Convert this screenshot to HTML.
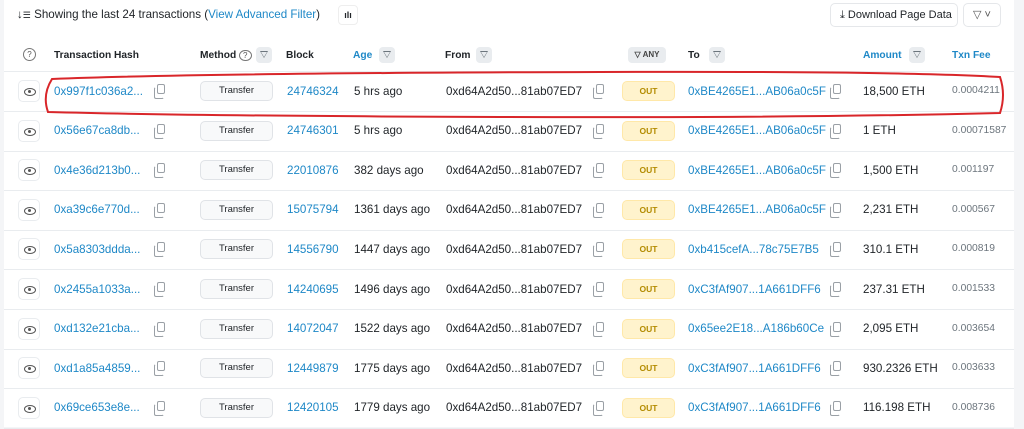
<!DOCTYPE html>
<html><head><meta charset="utf-8"><style>
*{margin:0;padding:0;box-sizing:border-box}
body{width:1024px;height:427px;overflow:hidden;background:#f4f5f7;font-family:"Liberation Sans",Arial,sans-serif;color:#212529;position:relative}
#card{position:absolute;left:4px;top:0;width:1010px;height:427px;background:#fff}
.a{position:absolute;white-space:nowrap}
.l{color:#1e88c7}
.t13{font-size:11.6px}
.h{font-size:10.2px;font-weight:bold;color:#212529}
.fb{position:absolute;width:16px;height:16px;background:#e9ecef;border-radius:4px}
.fb:after{content:"";position:absolute;left:4px;top:4px;border-left:4px solid transparent;border-right:4px solid transparent;border-top:7px solid #6c757d}
.fb:before{content:"";position:absolute;left:5px;top:5px;border-left:3px solid transparent;border-right:3px solid transparent;border-top:5px solid #e9ecef;z-index:2}
.eye{position:absolute;width:22px;height:22px;border:1px solid #e9ecef;border-radius:5px;background:#fff}
.eye:after{content:"";position:absolute;left:5px;top:7px;width:10px;height:6px;border:1.5px solid #555;border-radius:50%}
.eye:before{content:"";position:absolute;left:9px;top:9px;width:3px;height:3px;background:#555;border-radius:50%}
.meth{position:absolute;width:73px;height:20px;border:1px solid #e0e3e7;background:#f8f9fa;border-radius:5px;font-size:9.5px;text-align:center;line-height:18px;color:#212529}
.out{position:absolute;width:53px;height:20px;background:#fff3cd;border:1px solid #ffe8a8;border-radius:5px;font-size:8.5px;font-weight:bold;color:#b38b00;text-align:center;line-height:18px}
.cp{position:absolute;width:8px;height:10px;border:1.2px solid #9aa0a6;border-radius:2px;background:#fff}
.cp:before{content:"";position:absolute;left:-4px;top:2px;width:8px;height:10px;border:1.2px solid #9aa0a6;border-radius:2px;border-top-color:transparent;border-right-color:transparent}
.line{position:absolute;left:0;width:1010px;height:1px;background:#e9ecef}
.fee{font-size:10.3px;color:#6c757d}
</style></head><body>
<div id="card">
<div class="a" style="left:13px;top:8px;font-size:11.6px;color:#212529">↓<span style="font-size:9px">☰</span> Showing the last 24 transactions (<span class="l">View Advanced Filter</span>)</div>
<div class="a" style="left:334px;top:5px;width:20px;height:20px;border:1px solid #eee;border-radius:4px;font-size:9px;text-align:center;line-height:18px;font-weight:bold">ılı</div>
<div class="a" style="left:826px;top:3px;width:128px;height:24px;border:1px solid #e5e7ea;border-radius:5px;font-size:11px;line-height:22px;padding-left:9px">⤓ Download Page Data</div>
<div class="a" style="left:959px;top:3px;width:38px;height:24px;border:1px solid #e5e7ea;border-radius:5px;font-size:11px;line-height:22px;text-align:center;color:#555">▽ ˅</div>
<div class="a" style="left:19px;top:48px;width:13px;height:13px;border:1px solid #777;border-radius:50%;font-size:8px;text-align:center;line-height:11px;color:#555">?</div>
<div class="a h" style="left:50px;top:50px">Transaction Hash</div>
<div class="a h" style="left:196px;top:50px">Method <span style="font-weight:normal;border:1px solid #777;border-radius:50%;font-size:8px;padding:0 3px;color:#555">?</span></div>
<div class="fb" style="left:252px;top:47px"></div>
<div class="a h" style="left:282px;top:50px">Block</div>
<div class="a h l" style="left:349px;top:50px;color:#1e88c7">Age</div><div class="fb" style="left:375px;top:47px"></div>
<div class="a h" style="left:441px;top:50px">From</div><div class="fb" style="left:472px;top:47px"></div>
<div class="a" style="left:624px;top:47px;width:38px;height:16px;background:#e9ecef;border-radius:4px;font-size:8px;font-weight:bold;text-align:center;line-height:16px;color:#444">▽ ANY</div>
<div class="a h" style="left:684px;top:50px">To</div><div class="fb" style="left:705px;top:47px"></div>
<div class="a h" style="left:859px;top:50px;color:#1e88c7">Amount</div><div class="fb" style="left:905px;top:47px"></div>
<div class="a h" style="left:948px;top:50px;color:#1e88c7">Txn Fee</div>
<div class="line" style="top:71px"></div>

<div id="rows"></div>
<script>
var d=[["0x997f1c036a2...","24746324","5 hrs ago","0xBE4265E1...AB06a0c5F","18,500 ETH","0.0004211"],
["0x56e67ca8db...","24746301","5 hrs ago","0xBE4265E1...AB06a0c5F","1 ETH","0.00071587"],
["0x4e36d213b0...","22010876","382 days ago","0xBE4265E1...AB06a0c5F","1,500 ETH","0.001197"],
["0xa39c6e770d...","15075794","1361 days ago","0xBE4265E1...AB06a0c5F","2,231 ETH","0.000567"],
["0x5a8303ddda...","14556790","1447 days ago","0xb415cefA...78c75E7B5","310.1 ETH","0.000819"],
["0x2455a1033a...","14240695","1496 days ago","0xC3fAf907...1A661DFF6","237.31 ETH","0.001533"],
["0xd132e21cba...","14072047","1522 days ago","0x65ee2E18...A186b60Ce","2,095 ETH","0.003654"],
["0xd1a85a4859...","12449879","1775 days ago","0xC3fAf907...1A661DFF6","930.2326 ETH","0.003633"],
["0x69ce653e8e...","12420105","1779 days ago","0xC3fAf907...1A661DFF6","116.198 ETH","0.008736"]];
var h="";
d.forEach(function(r,i){var c=91+i*39.6;var t=c-6.5;
h+='<div class="eye" style="top:'+(c-11)+'px;left:14px"></div>';
h+='<div class="a t13 l" style="left:50px;top:'+t+'px">'+r[0]+'</div>';
h+='<div class="cp" style="left:153px;top:'+(c-7)+'px"></div>';
h+='<div class="meth" style="left:196px;top:'+(c-10)+'px">Transfer</div>';
h+='<div class="a t13 l" style="left:283px;top:'+t+'px">'+r[1]+'</div>';
h+='<div class="a t13" style="left:350px;top:'+t+'px">'+r[2]+'</div>';
h+='<div class="a t13" style="left:442px;top:'+t+'px">0xd64A2d50...81ab07ED7</div>';
h+='<div class="cp" style="left:592px;top:'+(c-7)+'px"></div>';
h+='<div class="out" style="left:618px;top:'+(c-10)+'px">OUT</div>';
h+='<div class="a t13 l" style="left:684px;top:'+t+'px">'+r[3]+'</div>';
h+='<div class="cp" style="left:829px;top:'+(c-7)+'px"></div>';
h+='<div class="a t13" style="left:859px;top:'+t+'px">'+r[4]+'</div>';
h+='<div class="a fee" style="left:948px;top:'+(c-6)+'px">'+r[5]+'</div>';
h+='<div class="line" style="top:'+Math.round(c+20)+'px"></div>';});
document.getElementById("rows").innerHTML=h;
</script>
</div>
<svg class="a" style="left:0;top:0" width="1024" height="427"><path d="M52 79 Q200 73 600 72 Q900 71 1000 77 Q1006 95 1000 113 Q800 118 500 117 Q200 116 48 112 Q42 95 52 79 Z" fill="none" stroke="#d9262a" stroke-width="2"/></svg>
</body></html>
